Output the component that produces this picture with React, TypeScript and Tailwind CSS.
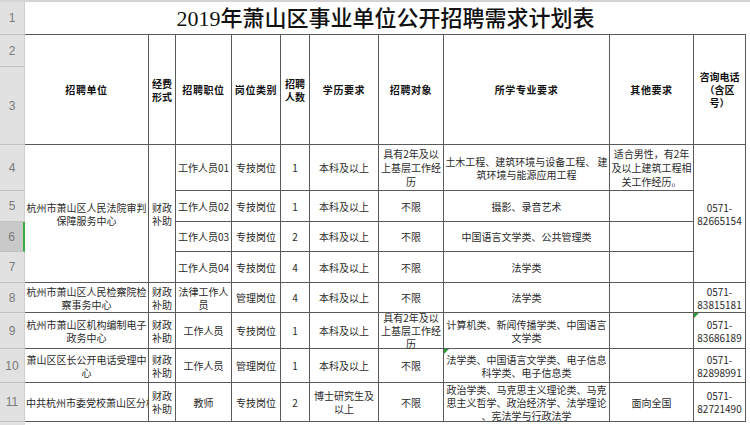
import React from "react";

const rowLabels: { n: string; h: string; active?: boolean }[] = [
  { n: "1", h: "h-[33px]" },
  { n: "2", h: "h-[32px]" },
  { n: "3", h: "h-[78px]" },
  { n: "4", h: "h-[46px]" },
  { n: "5", h: "h-[31px]" },
  { n: "6", h: "h-[30px]", active: true },
  { n: "7", h: "h-[31px]" },
  { n: "8", h: "h-[30px]" },
  { n: "9", h: "h-[36px]" },
  { n: "10", h: "h-[34px]" },
  { n: "11", h: "h-[39px]" },
];

const c =
  "relative flex items-center justify-center text-center border-r border-b border-[#5a5a5a] leading-[13px] min-w-0";

function Tri() {
  return (
    <span className="absolute left-0 top-0 w-0 h-0 border-t-[5px] border-t-[#2e9b3a] border-r-[5px] border-r-transparent" />
  );
}

export default function App() {
  const head = (
    <>
      <div className={`${c} row-span-2 font-bold text-[#111] tracking-[0.6px]`}>招聘单位</div>
      <div className={`${c} row-span-2 font-bold text-[#111]`}>经费<br />形式</div>
      <div className={`${c} row-span-2 font-bold text-[#111] tracking-[0.6px]`}>招聘职位</div>
      <div className={`${c} row-span-2 font-bold text-[#111] tracking-[0.6px]`}>岗位类别</div>
      <div className={`${c} row-span-2 font-bold text-[#111]`}>招聘<br />人数</div>
      <div className={`${c} row-span-2 font-bold text-[#111] tracking-[0.6px]`}>学历要求</div>
      <div className={`${c} row-span-2 font-bold text-[#111] tracking-[0.6px]`}>招聘对象</div>
      <div className={`${c} row-span-2 font-bold text-[#111] tracking-[0.6px]`}>所学专业要求</div>
      <div className={`${c} row-span-2 font-bold text-[#111] tracking-[0.6px]`}>其他要求</div>
      <div className={`${c} row-span-2 font-bold text-[#111]`}>咨询电话<br />（含区<br />号）</div>
    </>
  );

  return (
    <div
      className="w-[750px] h-[425px] overflow-hidden bg-white text-[#2a2a2a] border-t-2 border-[#d4d4d4] flex"
      style={{ fontFamily: '"Noto Sans CJK SC", sans-serif' }}
    >
      {/* row headers */}
      <div
        className="w-[25px] shrink-0 flex flex-col bg-[#e1e1e1]"
        style={{ fontFamily: '"Liberation Sans", sans-serif' }}
      >
        {rowLabels.map((r) => (
          <div
            key={r.n}
            className={`${r.h} shrink-0 flex items-center justify-center text-[12px] text-[#7a7a7a] border-b border-[#c2c2c2] ${
              r.active ? "bg-[#c9c9c9] border-r-2 border-r-[#3aa845]" : "border-r border-r-[#cfcfcf]"
            }`}
          >
            {r.n}
          </div>
        ))}
        <div className="flex-1" />
      </div>

      <div className="flex flex-col w-[721px] shrink-0">
        <div
          className="h-[32px] shrink-0 flex items-center justify-center text-[22px] font-medium text-[#111]"
          style={{ fontFamily: '"Liberation Serif", "Noto Sans CJK SC", serif' }}
        >
          2019年萧山区事业单位公开招聘需求计划表
        </div>
        <div className="grid grid-cols-[124px_27px_56px_49px_29px_69px_65px_166px_84px_52px] grid-rows-[31px_79px_46px_31px_30px_31px_30px_36px_34px_39px] border-t border-[#5a5a5a] text-[10px]">
          {head}

          {/* row 4 */}
          <div className={`${c} row-span-4`}>杭州市萧山区人民法院审判<br />保障服务中心</div>
          <div className={`${c} row-span-4`}>财政<br />补助</div>
          <div className={c}>工作人员01</div>
          <div className={c}>专技岗位</div>
          <div className={c}>1</div>
          <div className={c}>本科及以上</div>
          <div className={`${c} leading-[14px]`}>具有2年及以<br />上基层工作经<br />历</div>
          <div className={c}>土木工程、建筑环境与设备工程、 建<br />筑环境与能源应用工程</div>
          <div className={`${c} leading-[14px]`}>适合男性，有2年<br />及以上建筑工程相<br />关工作经历。</div>
          <div className={`${c} row-span-4`}>0571-<br />82665154</div>

          {/* row 5 */}
          <div className={c}>工作人员02</div>
          <div className={c}>专技岗位</div>
          <div className={c}>1</div>
          <div className={c}>本科及以上</div>
          <div className={c}>不限</div>
          <div className={c}>摄影、录音艺术</div>
          <div className={c}></div>

          {/* row 6 */}
          <div className={c}>工作人员03</div>
          <div className={c}>专技岗位</div>
          <div className={c}>2</div>
          <div className={c}>本科及以上</div>
          <div className={c}>不限</div>
          <div className={c}>中国语言文学类、公共管理类</div>
          <div className={c}></div>

          {/* row 7 */}
          <div className={c}>工作人员04</div>
          <div className={c}>专技岗位</div>
          <div className={c}>4</div>
          <div className={c}>本科及以上</div>
          <div className={c}>不限</div>
          <div className={c}>法学类</div>
          <div className={c}></div>

          {/* row 8 */}
          <div className={c}>杭州市萧山区人民检察院检<br />察事务中心</div>
          <div className={c}>财政<br />补助</div>
          <div className={c}>法律工作人<br />员</div>
          <div className={c}>管理岗位</div>
          <div className={c}>4</div>
          <div className={c}>本科及以上</div>
          <div className={c}>不限</div>
          <div className={c}>法学类</div>
          <div className={c}></div>
          <div className={c}>0571-<br />83815181</div>

          {/* row 9 */}
          <div className={c}>杭州市萧山区机构编制电子<br />政务中心</div>
          <div className={c}>财政<br />补助</div>
          <div className={c}>工作人员</div>
          <div className={c}>专技岗位</div>
          <div className={c}>1</div>
          <div className={c}>本科及以上</div>
          <div className={`${c} leading-[11.5px]`}>具有2年及以<br />上基层工作经<br />历</div>
          <div className={c}>计算机类、新闻传播学类、中国语言<br />文学类</div>
          <div className={c}></div>
          <div className={c}><Tri />0571-<br />83686189</div>

          {/* row 10 */}
          <div className={c}>萧山区区长公开电话受理中<br />心</div>
          <div className={c}>财政<br />补助</div>
          <div className={c}>工作人员</div>
          <div className={c}>管理岗位</div>
          <div className={c}>1</div>
          <div className={c}>本科及以上</div>
          <div className={c}>不限</div>
          <div className={c}><Tri />法学类、中国语言文学类、电子信息<br />科学类、电子信息类</div>
          <div className={c}></div>
          <div className={c}>0571-<br />82898991</div>

          {/* row 11 */}
          <div className={`${c} justify-start pl-px whitespace-nowrap overflow-hidden`}>中共杭州市委党校萧山区分校</div>
          <div className={c}>财政<br />补助</div>
          <div className={c}>教师</div>
          <div className={c}>专技岗位</div>
          <div className={c}>2</div>
          <div className={c}>博士研究生及<br />以上</div>
          <div className={c}>不限</div>
          <div className={`${c} leading-[12.5px]`}>政治学类、马克思主义理论类、马克<br />思主义哲学、政治经济学、法学理论<br />、宪法学与行政法学</div>
          <div className={c}>面向全国</div>
          <div className={c}>0571-<br />82721490</div>
        </div>
      </div>
    </div>
  );
}
